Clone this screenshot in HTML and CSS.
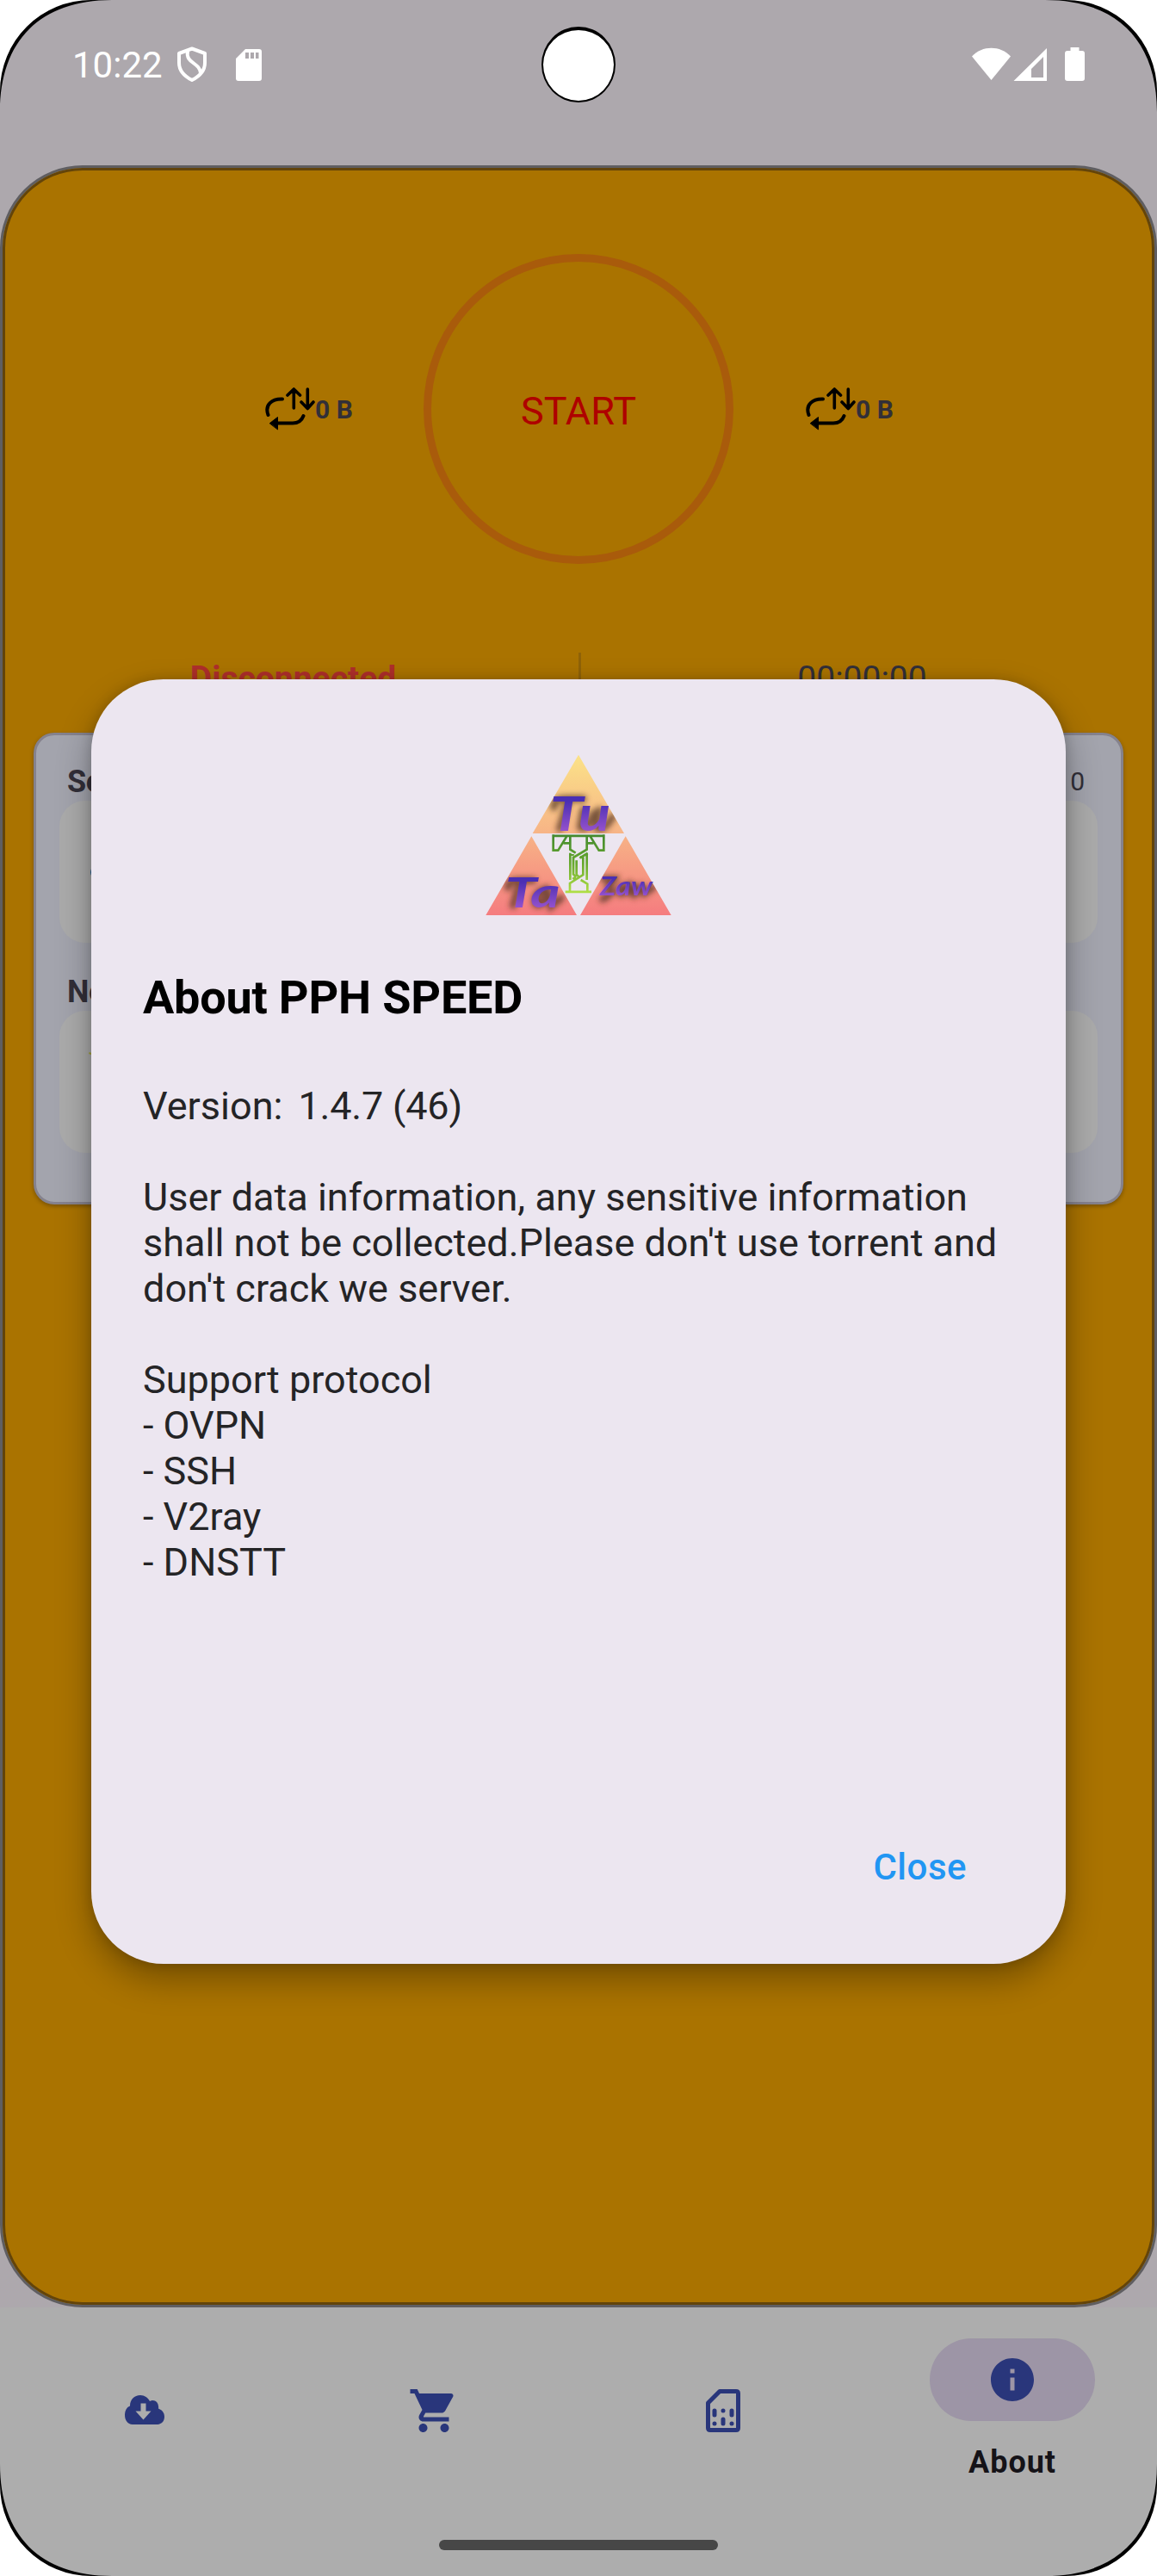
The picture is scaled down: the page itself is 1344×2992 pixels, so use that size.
FILE: index.html
```html
<!DOCTYPE html>
<html lang="en">
<head>
<meta charset="utf-8">
<title>PPH SPEED</title>
<link rel="stylesheet" href="styles.css">
</head>
<body>
<div class="screen">
  <header class="status-bar">
    <span class="clock">10:22</span>
    <svg class="shield" width="36" height="44" viewBox="205 54 36 44" fill="none" stroke="#fff" stroke-width="4" stroke-linejoin="round">
      <path d="M223 57.500L238 63V74C238 83 231 90 223 94C215 90 208 83 208 74V63Z"/>
      <path d="M218 60C215 75 232 73 233 86"/>
    </svg>
    <svg class="sd" width="30" height="37" viewBox="0 0 30 37" fill="#fff" fill-rule="evenodd">
      <path d="M11 0H27Q30 0 30 3V34Q30 37 27 37H3Q0 37 0 34V11ZM11 4V11H15V4ZM17 4V11H21V4ZM23 4V11H26.500V4Z"/>
    </svg>
    <svg class="system-icons" width="132" height="40" viewBox="1129 55 132 40" fill="#fff">
      <path d="M1151.500 93L1129 65.500C1141 52.500 1162 52.500 1174 65.500Z"/>
      <path fill-rule="evenodd" d="M1216 56V94H1177.500ZM1212 66L1198 80V90H1212Z"/>
      <path d="M1243.500 55H1253.500V59H1257Q1260 59 1260 62V91Q1260 94 1257 94H1240Q1237 94 1237 91V62Q1237 59 1240 59H1243.500Z"/>
    </svg>
  </header>

  <main class="home">
    <section class="connect">
      <div class="traffic">
        <svg width="58" height="50" viewBox="308 450 58 50" fill="none" stroke="#000" stroke-linecap="round" stroke-linejoin="round">
          <path stroke-width="4" d="M311.500 482C307 470 316 463 328 463.500M322 491.500H340C348 491.500 351 487 352.500 483"/>
          <path fill="#000" stroke-width="1" d="M313.500 491.500L322.500 484.500V498.500Z"/>
          <path stroke-width="3.600" d="M341.300 474V452M334 459L341.300 452L348.500 459M357.300 452V474M350 467L357.300 474.500L364 467"/>
        </svg><span>0 B</span>
      </div>
      <div class="start">START</div>
      <div class="traffic">
        <svg width="58" height="50" viewBox="308 450 58 50" fill="none" stroke="#000" stroke-linecap="round" stroke-linejoin="round">
          <path stroke-width="4" d="M311.500 482C307 470 316 463 328 463.500M322 491.500H340C348 491.500 351 487 352.500 483"/>
          <path fill="#000" stroke-width="1" d="M313.500 491.500L322.500 484.500V498.500Z"/>
          <path stroke-width="3.600" d="M341.300 474V452M334 459L341.300 452L348.500 459M357.300 452V474M350 467L357.300 474.500L364 467"/>
        </svg><span>0 B</span>
      </div>
    </section>
    <section class="state">
      <span class="state-label">Disconnected</span>
      <span class="divider"></span>
      <span class="timer">00:00:00</span>
    </section>
    <section class="panel">
      <div class="panel-row"><b>Se</b><span>0</span></div>
      <div class="choice"><i class="server-icon"></i></div>
      <div class="panel-row second"><b>Ne</b></div>
      <div class="choice"><i class="network-icon"></i></div>
    </section>
  </main>

  <nav class="nav">
    <div class="tab">
      <svg width="46" height="34" viewBox="0 0 46 34" fill="#29367b" fill-rule="evenodd">
        <path d="M9 34C3 33.500 0 29 0 23C0 18 2 14 6 12.500C6 5 11 0 18 0C23 0 27 3 29 7C34 4 40 8 39 15.500C43 17 46 20 46 25C46 30 43 33.500 38 34ZM18.500 9.500V18.500H12.500L21.500 28.500L30.500 18.500H24.500V9.500Z"/>
      </svg>
    </div>
    <div class="tab">
      <svg width="60" height="60" viewBox="0 0 24 24" fill="#29367b">
        <path d="M7 18c-1.100 0-1.990.9-1.990 2S5.900 22 7 22s2-.9 2-2-.9-2-2-2zM1 2v2h2l3.600 7.590-1.350 2.450c-.16.28-.25.61-.25.960 0 1.100.9 2 2 2h12v-2H7.420c-.14 0-.25-.11-.25-.25l.03-.12.9-1.630h7.450c.75 0 1.410-.41 1.750-1.030l3.580-6.490c.08-.14.12-.31.12-.48 0-.55-.45-1-1-1H5.210l-.94-2H1zm16 16c-1.100 0-1.990.9-1.990 2s.89 2 1.990 2 2-.9 2-2-.9-2-2-2z"/>
      </svg>
    </div>
    <div class="tab">
      <svg width="40" height="50" viewBox="0 0 40 50" fill="none" stroke="#29367b" stroke-width="5" stroke-linecap="round" stroke-linejoin="round">
        <path d="M2.500 16L16 2.500H35Q37.500 2.500 37.500 5V45Q37.500 47.500 35 47.500H5Q2.500 47.500 2.500 45Z"/>
        <path d="M10 25V30M20 25V25.100M30 25V30M10 40V40.100M20 35V40M30 40V40.100"/>
      </svg>
    </div>
    <div class="tab active">
      <div class="pill">
        <svg width="60" height="60" viewBox="0 0 24 24" fill="#29367b">
          <path d="M12 2C6.480 2 2 6.480 2 12s4.480 10 10 10 10-4.480 10-10S17.520 2 12 2zm1 15h-2v-6h2v6zm0-8h-2V7h2v2z"/>
        </svg>
      </div>
      <span class="tab-label">About</span>
    </div>
  </nav>
  <div class="home-bar"></div>
  <div class="camera"></div>

  <section class="dialog">
    <svg class="logo" width="216" height="188" viewBox="72 80 648 564">
      <defs>
        <linearGradient id="sun" gradientUnits="userSpaceOnUse" x1="0" y1="82" x2="0" y2="641">
          <stop offset="0" stop-color="#fbe288"/><stop offset=".5" stop-color="#f7b386"/><stop offset="1" stop-color="#f57c7f"/>
        </linearGradient>
        <linearGradient id="ink" x1="0" y1="0" x2="0" y2="1">
          <stop offset=".3" stop-color="#4a2fb4"/><stop offset=".9" stop-color="#a057d0"/>
        </linearGradient>
        <linearGradient id="leaf" gradientUnits="userSpaceOnUse" x1="0" y1="360" x2="0" y2="564">
          <stop offset="0" stop-color="#43892e"/><stop offset=".5" stop-color="#68a92f"/><stop offset="1" stop-color="#b1e046"/>
        </linearGradient>
        <clipPath id="tris"><path d="M396 82L555 356H236ZM232 366L390 641H73ZM560 366L719 641H402Z"/></clipPath>
        <filter id="soft" x="-30%" y="-30%" width="160%" height="160%"><feGaussianBlur stdDeviation="9"/></filter>
      </defs>
      <path fill="url(#sun)" d="M396 82L555 356H236ZM232 366L390 641H73ZM560 366L719 641H402Z"/>
      <g clip-path="url(#tris)"><g filter="url(#soft)" fill="none" stroke="#50301f" stroke-opacity=".75" stroke-width="24" stroke-linecap="round">
        <path d="M310 265Q310 235 350 235H412M362 238L330 340M412 275L402 335Q425 350 450 285M468 275L458 335Q480 355 515 298"/>
        <path d="M150 545Q150 520 185 520H238M192 522L168 607M285 548Q240 560 245 600Q270 620 290 550L300 610L335 582"/>
        <path d="M484 515H520L500 545Q530 560 480 585M550 540Q530 560 545 567L570 540L575 565M590 540L595 565L615 545L625 565L655 545"/>
      </g></g>
      <g class="script" fill="url(#ink)">
        <text x="296" y="347" font-size="164" textLength="212" lengthAdjust="spacingAndGlyphs">Tu</text>
        <text x="140" y="615" font-size="142" textLength="192" lengthAdjust="spacingAndGlyphs">Ta</text>
        <text x="470" y="572" font-size="92" textLength="184" lengthAdjust="spacingAndGlyphs">Zaw</text>
      </g>
      <g fill="none" stroke="url(#leaf)" stroke-width="8">
        <path d="M304 364.500H488M308 360V415H325L355 366M344 390H364M367 364V412L386 424M484 360V415H467L437 366M448 390H428M425 364V412L378 440V498L388 508"/>
        <path d="M367 424V518M380 432L367 428M386 508L376 515M406 434V440H412V500L366 530V558M425 424V518M400 442L428 425M404 518L427 532V558M350 559.500H441"/>
        <path d="M389 450V500L397 507"/>
      </g>
    </svg>
    <h1 class="dialog-title">About PPH SPEED</h1>
    <div class="dialog-text">Version: <span class="version">&nbsp;1.4.7 (46)</span>

User data information, any sensitive information
shall not be collected.Please don't use torrent and
don't crack we server.

Support protocol
- OVPN
- SSH
- V2ray
- DNSTT</div>
    <div class="actions"><span class="close">Close</span></div>
  </section>

  <svg class="corner tl" width="130" height="130" viewBox="0 0 130 130"><path d="M0 0H130C47 0 0 47 0 130Z"/><path fill="#fff" d="M0 0H106A106 106 0 0 0 0 106Z"/></svg>
  <svg class="corner tr" width="130" height="130" viewBox="0 0 130 130"><path d="M0 0H130C47 0 0 47 0 130Z"/><path fill="#fff" d="M0 0H106A106 106 0 0 0 0 106Z"/></svg>
  <svg class="corner bl" width="130" height="130" viewBox="0 0 130 130"><path d="M0 0H130C47 0 0 47 0 130Z"/><path fill="#fff" d="M0 0H106A106 106 0 0 0 0 106Z"/></svg>
  <svg class="corner br" width="130" height="130" viewBox="0 0 130 130"><path d="M0 0H130C47 0 0 47 0 130Z"/><path fill="#fff" d="M0 0H106A106 106 0 0 0 0 106Z"/></svg>
</div>
</body>
</html>
```

FILE: styles.css
```css
* { box-sizing: border-box; }
body { margin: 0; background: #fff; font-family: Roboto, sans-serif; }
svg { display: block; flex: none; }

.screen {
  position: relative;
  display: flex;
  flex-direction: column;
  width: 1344px;
  height: 2992px;
  overflow: hidden;
  background: #ada8ad;
}

/* Status bar */
.status-bar {
  display: flex;
  align-items: center;
  height: 192px;
  padding: 0 83px 42px 84px;
  color: #fff;
}
.clock { width: 121px; font-size: 42px; line-height: 50px; padding-top: 2px; white-space: nowrap; }
.sd { margin-left: 33px; }
.system-icons { margin-left: auto; }

/* Main screen */
.home {
  height: 2488px;
  border: 3px solid #5f5e61;
  border-radius: 96px;
  background: #aa7300;
  box-shadow: inset 0 0 0 3px #63440a;
  padding: 100px 36px 0;
}
.connect {
  display: grid;
  grid-template-columns: 184px 360px 110px;
  align-items: center;
  padding-left: 269px;
}
.connect > :last-child { margin-left: 84px; }
.traffic { display: flex; align-items: center; width: 110px; font-size: 30px; font-weight: 700; line-height: 36px; color: #322f38; white-space: nowrap; }
.traffic span { padding-top: 2px; }
.start {
  display: flex;
  align-items: center;
  justify-content: center;
  width: 360px;
  height: 360px;
  padding-top: 4px;
  border: 9px solid #a95b0b;
  border-radius: 50%;
  font-size: 45px;
  color: #af0000;
}
.state {
  display: grid;
  grid-template-columns: 633px 3px 653px;
  align-items: center;
  height: 60px;
  margin-top: 103px;
  font-size: 39px;
  text-align: center;
}
.state-label { color: #ae2f2b; font-weight: 700; padding-right: 30px; }
.divider { height: 60px; background: #8f6208; }
.timer { color: #322f38; }
.panel {
  width: 1266px;
  height: 548px;
  margin-top: 33px;
  padding: 30px 27px 0;
  border: 3px solid #85828d;
  border-radius: 24px;
  background: #a3a4ad;
  box-shadow: 0 2px 5px rgba(0, 0, 0, .3);
}
.panel-row { display: flex; justify-content: space-between; align-items: center; height: 46px; padding: 0 15px 0 9px; color: #322f38; font-size: 36px; }
.panel-row b { padding-top: 1px; letter-spacing: -.5px; }
.panel-row span { font-size: 30px; }
.panel-row.second { margin-top: 33px; }
.choice { display: flex; align-items: center; height: 165px; padding-left: 36px; border-radius: 30px; background: #ababab; }
.server-icon { width: 14px; height: 14px; border-radius: 50%; background: #235f93; }
.network-icon { width: 12px; height: 2px; margin: 0 0 64px -2px; background: #a2a23c; transform: rotate(20deg); }

/* Bottom navigation */
.nav { display: grid; grid-template-columns: repeat(4, 336px); height: 312px; background: #adadad; }
.tab { display: flex; flex-direction: column; align-items: center; justify-content: center; height: 240px; }
.tab.active { justify-content: flex-start; padding-top: 36px; }
.tab:first-child { padding-bottom: 2px; }
.pill { display: flex; align-items: center; justify-content: center; width: 192px; height: 96px; border-radius: 48px; background: #9d95a6; }
.tab-label { margin-top: 26px; font-size: 36px; line-height: 44px; font-weight: 700; letter-spacing: 1px; color: #151318; }
.home-bar { position: absolute; left: 510px; top: 2950px; width: 324px; height: 12px; border-radius: 6px; background: #474747; }
.camera { position: absolute; left: 629px; top: 31px; width: 86px; height: 88px; border: solid #000; border-width: 4px 2px 2px; border-radius: 50%; background: #fff; }

/* About dialog */
.dialog {
  position: absolute;
  left: 106px;
  top: 789px;
  width: 1132px;
  height: 1492px;
  display: flex;
  flex-direction: column;
  padding: 87px 60px 0;
  border-radius: 84px;
  background: #ece6f0;
  box-shadow: 0 18px 40px rgba(0, 0, 0, .32), 0 0 14px rgba(0, 0, 0, .16);
}
.logo { align-self: center; }
.script { font-family: Lato, sans-serif; font-weight: 700; font-style: italic; }
.dialog-title { margin: 63px 0 0; font-size: 54px; line-height: 64px; font-weight: 700; letter-spacing: -.2px; color: #000; white-space: nowrap; }
.dialog-text { margin-top: 67px; font-size: 45px; line-height: 53px; color: #242426; white-space: pre; }
.version { margin-left: -4px; letter-spacing: -.2px; }
.actions { display: flex; justify-content: flex-end; margin-top: 303px; padding-right: 55px; }
.close { font-size: 42px; line-height: 50px; font-weight: 500; color: #2196f3; letter-spacing: .5px; }

/* Rounded display corners */
.corner { position: absolute; }
.tl { left: 0; top: 0; }
.tr { right: 0; top: 0; transform: scaleX(-1); }
.bl { left: 0; bottom: 0; transform: scaleY(-1); }
.br { right: 0; bottom: 0; transform: scale(-1); }
```
